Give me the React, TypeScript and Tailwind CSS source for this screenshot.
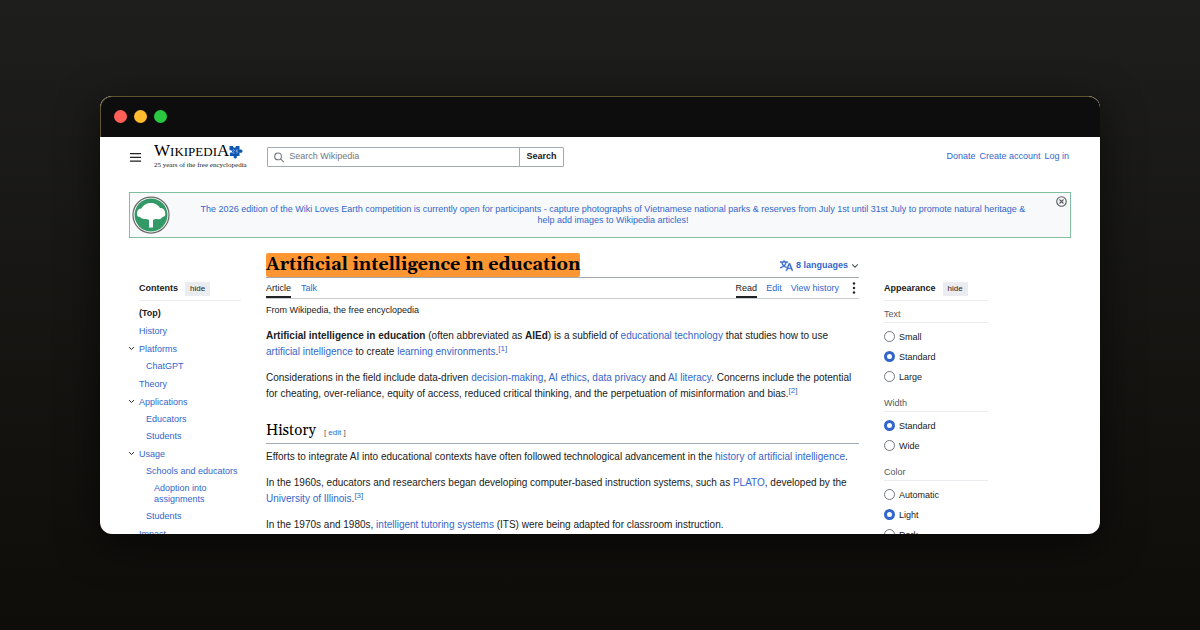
import React from 'react';

const Link: React.FC<{ children: React.ReactNode; className?: string }> = ({ children, className = '' }) => (
  <a href="#" className={`text-[#3366cc] ${className}`}>{children}</a>
);

const Chevron: React.FC<{ className?: string }> = ({ className = '' }) => (
  <svg viewBox="0 0 8 8" className={className} fill="none" stroke="currentColor" strokeWidth="1.1" aria-hidden="true">
    <path d="M1.2 2.4 4 5.2l2.8-2.8" />
  </svg>
);

type TocItem = { label: string; children?: TocItem[] };

const toc: TocItem[] = [
  { label: 'History' },
  { label: 'Platforms', children: [{ label: 'ChatGPT' }] },
  { label: 'Theory' },
  { label: 'Applications', children: [{ label: 'Educators' }, { label: 'Students' }] },
  {
    label: 'Usage',
    children: [
      { label: 'Schools and educators', children: [{ label: 'Adoption into assignments' }] },
      { label: 'Students' },
    ],
  },
  { label: 'Impact' },
];

const settings = [
  { title: 'Text', options: ['Small', 'Standard', 'Large'], selected: 'Standard' },
  { title: 'Width', options: ['Standard', 'Wide'], selected: 'Standard' },
  { title: 'Color', options: ['Automatic', 'Light', 'Dark'], selected: 'Light' },
];

const Logo = () => (
  <a href="#" className="block pb-px font-['Liberation_Serif',serif] text-black">
    <span className="flex items-center">
      <span className="text-[17px] leading-4">W<span className="text-[13px]">IKIPEDI</span>A</span>
      <svg viewBox="0 0 28 28" className="size-[14px] shrink-0" aria-hidden="true">
        <path
          fill="#0d57b0"
          d="M1 2h7.500c-.8 2 .5 3.500 2.500 3.500S14.300 4 13.500 2H21v7.500c3-1 6-.2 6 2.800s-3 3.800-6 2.800V22h-5.500c.8 3.500-.7 5-3 5s-3.800-1.500-3-5H2v-7c2.500.8 4-.3 4-2.200S4 9.800 1 10.500z"
        />
        <path d="M7 11c3-3 5-1 2.500 1.500L7 16h4M18.500 10H15l-.7 3c4-1 4.500 3 .2 3" fill="none" stroke="#b9d6f7" strokeWidth="1.300" />
      </svg>
    </span>
    <span className="block text-[7px] leading-[10px] text-[#202122]">25 years of the free encyclopedia</span>
  </a>
);

const Header = () => (
  <header className="flex h-5 items-center">
    <button aria-label="Main menu" className="w-3 pl-px">
      <svg viewBox="0 0 20 20" className="size-[11px]" fill="#202122" aria-hidden="true">
        <path d="M0 2h20v2.300H0zm0 6.800h20v2.300H0zm0 6.800h20v2.300H0z" />
      </svg>
    </button>
    <div className="ml-[13px] w-[113px]"><Logo /></div>
    <form className="flex h-5 w-[297px]">
      <label className="flex flex-1 items-center gap-[5px] rounded-l-[1px] border border-[#a2a9b1] pl-[6px]">
        <svg viewBox="0 0 12 12" className="size-[11px] text-[#72777d]" fill="none" stroke="currentColor" strokeWidth="1.200" aria-hidden="true">
          <circle cx="4.700" cy="4.700" r="3.900" />
          <path d="m7.500 7.500 4 4" />
        </svg>
        <input aria-label="Search Wikipedia" placeholder="Search Wikipedia" className="w-full min-w-0 text-[9px] outline-none placeholder:text-[#72777d]" />
      </label>
      <button type="button" className="-ml-px w-[45px] rounded-r-[1px] border border-[#a2a9b1] text-[9px] font-bold text-[#202122]">Search</button>
    </form>
    <nav className="mr-[2px] ml-auto flex gap-[4px] text-[9px]">
      <Link>Donate</Link>
      <Link>Create account</Link>
      <Link>Log in</Link>
    </nav>
  </header>
);

const Banner = () => (
  <section className="relative mt-[25px] flex h-[46px] items-center border border-[#7fbf9f] bg-[#f8f9fa] pl-[2px]">
    <svg viewBox="0 0 76 76" className="size-[38px] shrink-0" aria-hidden="true">
      <circle cx="38" cy="38" r="36" fill="#fff" stroke="#6b6b6b" strokeWidth="2.500" />
      <circle cx="38" cy="38" r="33" fill="#339966" />
      <path
        fill="#fff"
        d="M34 63V48c-2-2-5-2-8-2-5 0-8-2-10-4-5 0-7-4-6-8 0-5 4-9 9-9 3-7 11-11 19-11s15 4 18 10c6 0 10 4 10 9 2 5 0 8-5 9-3 4-6 5-11 4-3 0-6 0-8 2v15z"
      />
    </svg>
    <p className="flex-1 pr-[14px] text-center text-[9px] leading-[11px]">
      <Link>
        The 2026 edition of the Wiki Loves Earth competition is currently open for participants - capture photographs of Vietnamese national parks &amp; reserves from July 1st until 31st July to promote natural heritage &amp;
        <br />
        help add images to Wikipedia articles!
      </Link>
    </p>
    <button aria-label="Close" className="absolute top-[3px] right-[3px]">
      <svg viewBox="0 0 22 22" className="size-[11px]" fill="none" stroke="#54595d" strokeWidth="2.200" aria-hidden="true">
        <circle cx="11" cy="11" r="9.500" />
        <path d="m7 7 8 8m0-8-8 8" />
      </svg>
    </button>
  </section>
);

const PanelHeader: React.FC<{ title: string }> = ({ title }) => (
  <div className="flex h-6 items-center gap-[7px] border-b border-[#eaecf0] pt-px text-[9px]">
    <h2 className="font-bold text-[#202122]">{title}</h2>
    <button className="h-[14px] bg-[#eaecf0] px-[5px] text-[8px] text-[#202122]">hide</button>
  </div>
);

const TocList: React.FC<{ items: TocItem[]; depth?: number }> = ({ items, depth = 0 }) => (
  <ul className={depth === 0 ? 'flex flex-col gap-px' : depth === 1 ? 'pl-[7px]' : 'pl-2'}>
    {items.map((item) => (
      <li key={item.label} className="relative">
        {depth === 0 && item.children && <Chevron className="absolute top-[4px] -left-[11px] size-[7px] text-[#202122]" />}
        <Link className="block py-[3px] leading-[11px]">{item.label}</Link>
        {item.children && <TocList items={item.children} depth={depth + 1} />}
      </li>
    ))}
  </ul>
);

const Contents = () => (
  <aside className="w-28 shrink-0 pt-6 pl-[10px]">
    <PanelHeader title="Contents" />
    <nav className="mt-1 flex flex-col gap-px text-[9px]">
      <a href="#" className="py-[3px] leading-[11px] font-bold text-[#202122]">(Top)</a>
      <TocList items={toc} />
    </nav>
  </aside>
);

const Ref: React.FC<{ n: number }> = ({ n }) => (
  <sup className="-top-1 text-[8px] leading-none"><Link>[{n}]</Link></sup>
);

const Article = () => (
  <article className="min-w-0 flex-1 text-[#202122]">
    <div className="flex h-[25px] items-start justify-between border-b border-[#a2a9b1]">
      <h1 className="rounded-xs bg-[#ff9632] font-['Gelasio','Georgia','Liberation_Serif',serif] text-[18px] leading-6 font-bold whitespace-nowrap text-black">
        Artificial intelligence in education
      </h1>
      <button className="flex h-[25px] items-center gap-[3px] text-[9px] font-bold text-[#3366cc]">
        <svg viewBox="0 0 20 20" className="size-[13px]" fill="currentColor" stroke="currentColor" strokeWidth=".6" aria-hidden="true">
          <path d="M20 18h-1.440a.6.6 0 0 1-.4-.12.800.800 0 0 1-.23-.31L17 15h-5l-1 2.540a.800.800 0 0 1-.22.300.600.600 0 0 1-.4.140H9l4.550-11.470h1.890zm-3.530-4.310L14.890 9.500a12 12 0 0 1-.39-1.240q-.09.370-.19.690l-.19.560-1.580 4.190zm-6.300-1.580a13.400 13.400 0 0 1-2.910-1.410 11.460 11.460 0 0 0 2.810-5.370H12V4H7.310a4 4 0 0 0-.2-.56C6.870 2.790 6.600 2 6.600 2l-1.470.500s.4.890.6 1.500H0v1.330h2.150A11.200 11.200 0 0 0 5 10.700a17.200 17.200 0 0 1-5 2.100q.56.820.87 1.380a23.300 23.300 0 0 0 5.220-2.510 15.600 15.600 0 0 0 3.560 1.770zM3.630 5.330h4.910a8.100 8.100 0 0 1-2.450 4.450 9.100 9.100 0 0 1-2.460-4.450" />
        </svg>
        8 languages
        <Chevron className="size-[8px] text-[#54595d]" />
      </button>
    </div>
    <nav className="flex h-[21px] border-b border-[#c8ccd1] text-[9px] leading-5">
      <a href="#" className="h-5 border-b-2 border-[#202122]">Article</a>
      <Link className="ml-[10px]">Talk</Link>
      <div className="ml-auto flex gap-[9px]">
        <a href="#" className="h-5 border-b-2 border-[#202122]">Read</a>
        <Link>Edit</Link>
        <Link>View history</Link>
      </div>
      <button aria-label="More" className="ml-[13px] w-[7px]">
        <svg viewBox="0 0 4 12" className="h-3 w-1" fill="#202122" aria-hidden="true">
          <circle cx="2" cy="1.500" r="1.200" />
          <circle cx="2" cy="6" r="1.200" />
          <circle cx="2" cy="10.500" r="1.200" />
        </svg>
      </button>
    </nav>
    <p className="mt-[5px] text-[9px] leading-3">From Wikipedia, the free encyclopedia</p>
    <div className="mt-3 space-y-[10px] text-[10px] leading-4">
      <p>
        <b>Artificial intelligence in education</b> (often abbreviated as <b>AIEd</b>) is a subfield of <Link>educational technology</Link> that studies how to use <Link>artificial intelligence</Link> to create <Link>learning environments</Link>.<Ref n={1} />
      </p>
      <p>
        Considerations in the field include data-driven <Link>decision-making</Link>, <Link>AI ethics</Link>, <Link>data privacy</Link> and <Link>AI literacy</Link>. Concerns include the potential for cheating, over-reliance, equity of access, reduced critical thinking, and the perpetuation of misinformation and bias.<Ref n={2} />
      </p>
    </div>
    <div className="mt-[17px] flex h-[25px] items-center gap-2 border-b border-[#a2a9b1]">
      <h2 className="font-['Gelasio','Georgia','Liberation_Serif',serif] text-[15px] leading-5 text-black">History</h2>
      <span className="pt-1 text-[8px] text-[#54595d]">[ <Link>edit</Link> ]</span>
    </div>
    <div className="mt-[5px] space-y-[10px] text-[10px] leading-4">
      <p>Efforts to integrate AI into educational contexts have often followed technological advancement in the <Link>history of artificial intelligence</Link>.</p>
      <p>
        In the 1960s, educators and researchers began developing computer-based instruction systems, such as <Link>PLATO</Link>, developed by the <Link>University of Illinois</Link>.<Ref n={3} />
      </p>
      <p>In the 1970s and 1980s, <Link>intelligent tutoring systems</Link> (ITS) were being adapted for classroom instruction.</p>
    </div>
  </article>
);

const Appearance = () => (
  <aside className="w-[187px] shrink-0 pt-6">
    <div className="w-[104px]">
      <PanelHeader title="Appearance" />
      <div className="mt-1 space-y-[6px] text-[9px]">
        {settings.map((group) => (
          <fieldset key={group.title}>
            <legend className="mb-[5px] h-[18px] w-full border-b border-[#eaecf0] leading-[18px] text-[#54595d]">{group.title}</legend>
            {group.options.map((option) => (
              <label key={option} className="flex h-5 items-center gap-1 text-[#202122]">
                <input
                  type="radio"
                  name={group.title}
                  defaultChecked={option === group.selected}
                  className="mb-[3px] size-[11px] appearance-none rounded-full border border-[#72777d] bg-white checked:border-[3px] checked:border-[#3366cc]"
                />
                {option}
              </label>
            ))}
          </fieldset>
        ))}
      </div>
    </div>
  </aside>
);

export default function App() {
  return (
    <main className="h-screen bg-linear-to-b from-[#1e1e1c] to-[#0e0d0a] px-[100px] py-24 font-['Liberation_Sans',Arial,sans-serif]">
      <div className="flex h-full flex-col overflow-hidden rounded-xl bg-white shadow-[0_10px_40px_rgba(0,0,0,0.6)]">
        <div className="flex h-[41px] shrink-0 items-center gap-[7px] rounded-t-xl border-t border-l border-[#5c5530] bg-[#0d0d0d] pb-[2px] pl-[13px]">
          <span className="size-[13px] rounded-full bg-[#ff5f57]" />
          <span className="size-[13px] rounded-full bg-[#febc2e]" />
          <span className="size-[13px] rounded-full bg-[#28c840]" />
        </div>
        <div className="min-h-0 flex-1 overflow-hidden px-[29px] pt-[10px]">
          <Header />
          <Banner />
          <div className="mt-[15px] flex gap-[25px]">
            <Contents />
            <Article />
            <Appearance />
          </div>
        </div>
      </div>
    </main>
  );
}
